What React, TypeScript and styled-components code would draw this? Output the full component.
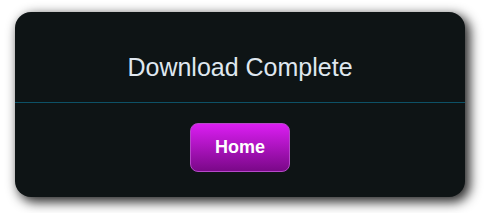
import styled, { createGlobalStyle } from "styled-components";

const Global = createGlobalStyle`
  body {
    margin: 0;
    background: #ffffff;
    font-family: "Liberation Sans", Arial, sans-serif;
  }
`;

const Page = styled.div`
  padding: 12px 20px 16px 15px;
`;

const Card = styled.div`
  width: 450px;
  background: #0e1415;
  border-radius: 16px;
  box-shadow: 4px 4px 12px 1px rgba(0, 0, 0, 0.85);
  overflow: hidden;
`;

const Header = styled.div`
  height: 91px;
  box-sizing: border-box;
  display: flex;
  align-items: flex-end;
  justify-content: center;
  padding-bottom: 20px;
  border-bottom: 1px solid #0d5166;
`;

const Title = styled.h2`
  margin: 0;
  font-weight: 400;
  font-size: 25px;
  line-height: 29px;
  color: #dfe7ef;
`;

const Footer = styled.div`
  display: flex;
  justify-content: center;
  padding: 20px 0 25px;
`;

const Button = styled.button`
  width: 100px;
  height: 49px;
  border-radius: 8px;
  border: 1px solid #b54ac8;
  background: linear-gradient(to bottom, #db1ef2, #7a0888);
  color: #ffffff;
  font-family: "Liberation Sans", Arial, sans-serif;
  font-weight: 700;
  font-size: 18px;
  cursor: pointer;
`;

export default function App() {
  return (
    <>
      <Global />
      <Page>
        <Card>
          <Header>
            <Title>Download Complete</Title>
          </Header>
          <Footer>
            <Button>Home</Button>
          </Footer>
        </Card>
      </Page>
    </>
  );
}
